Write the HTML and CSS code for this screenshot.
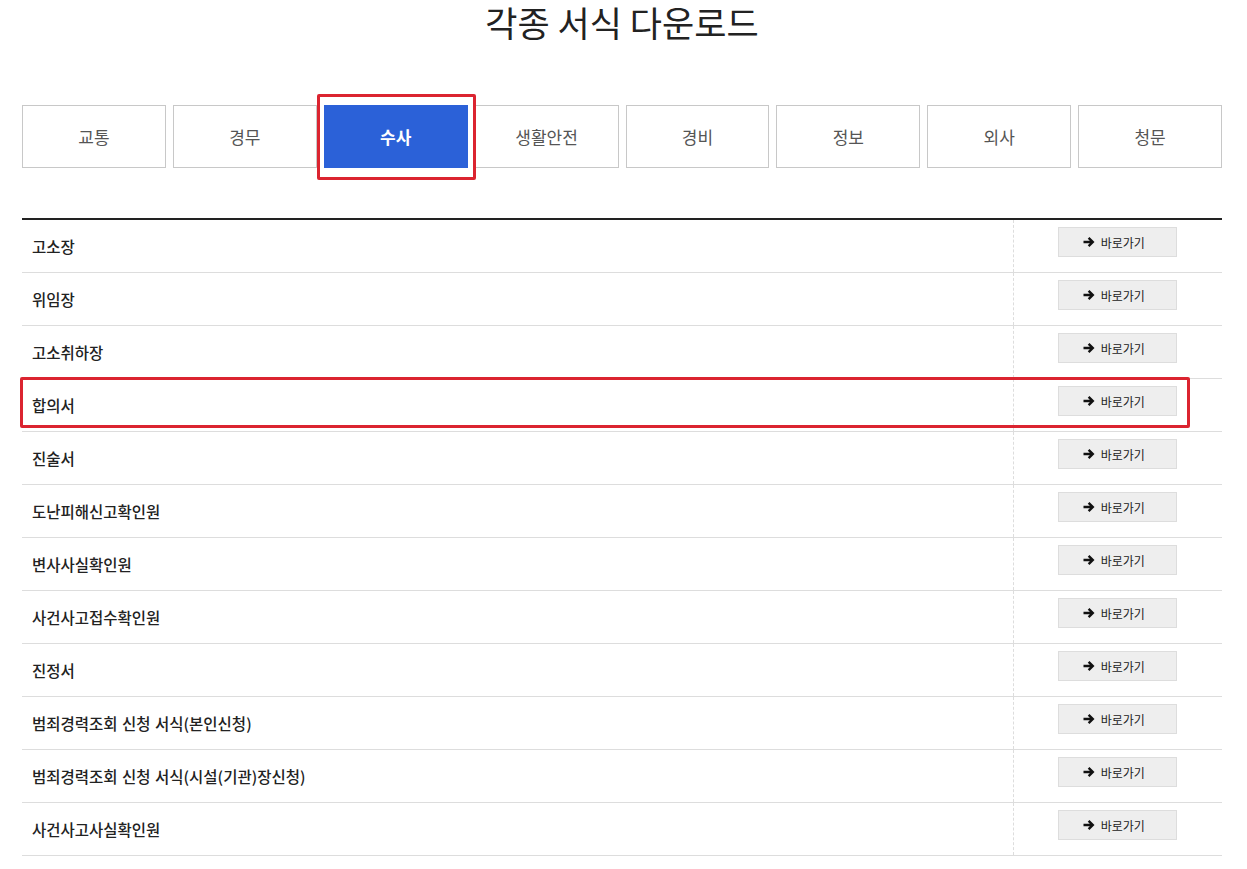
FILE: index.html
```html
<!DOCTYPE html>
<html>

<head>
	<meta http-equiv="Content-Type" content="text/html; charset=utf-8"/>
	<title>각종 서식 다운로드</title>
	<link rel="stylesheet" href="styles.css">
</head>

<body>
<div class="wrap">
	<h1 class="title">각종 서식 다운로드</h1>

	<ul class="tabs">
		<li><a href="#">교통</a></li>
		<li><a href="#">경무</a></li>
		<li class="on"><a href="#">수사</a></li>
		<li><a href="#">생활안전</a></li>
		<li><a href="#">경비</a></li>
		<li><a href="#">정보</a></li>
		<li><a href="#">외사</a></li>
		<li><a href="#">청문</a></li>
		<span class="mark mark-tab"></span>
	</ul>

	<div class="list">
		<table>
			<colgroup>
				<col/>
				<col class="col-btn"/>
			</colgroup>
			<tbody id="rows">
			</tbody>
		</table>
		<span class="mark mark-row"></span>
	</div>
</div>
<script>
	var forms = [
		"고소장",
		"위임장",
		"고소취하장",
		"합의서",
		"진술서",
		"도난피해신고확인원",
		"변사사실확인원",
		"사건사고접수확인원",
		"진정서",
		"범죄경력조회 신청 서식(본인신청)",
		"범죄경력조회 신청 서식(시설(기관)장신청)",
		"사건사고사실확인원"
	];

	var arrow = '<svg class="ico" viewBox="0 0 12 12" width="12" height="12"><path d="M0.5 6h9M5.6 1.8L9.8 6 5.6 10.2" fill="none" stroke="#111" stroke-width="2.4"/></svg>';

	var tbody = document.getElementById('rows');
	forms.forEach(function (name) {
		var tr = document.createElement('tr');
		tr.innerHTML = '<td class="name">' + name + '</td>' +
			'<td class="go"><a class="btn" href="#">' + arrow + '<span>바로가기</span></a></td>';
		tbody.appendChild(tr);
	});
</script>
</body>

</html>
```

FILE: styles.css
```css
html {
    font-family: "Noto Sans CJK KR", "Noto Sans", sans-serif;
    color: #222;
}

body {
    margin: 0;
    background: #fff;
}

a {
    color: inherit;
    text-decoration: none;
}

.wrap {
    width: 1200px;
    margin: 0 0 0 22px;
}

.title {
    margin: 0;
    padding-top: 2px;
    height: 92px;
    line-height: 40px;
    font-size: 35px;
    font-weight: 400;
    text-align: center;
    color: #222;
}

.tabs {
    position: relative;
    list-style: none;
    margin: 0;
    padding: 0;
    padding-top: 11px;
    display: grid;
    grid-template-columns: repeat(8, 1fr);
    column-gap: 7px;
}

.tabs li a {
    display: flex;
    align-items: center;
    justify-content: center;
    height: 61px;
    border: 1px solid #c8c8c8;
    font-size: 17px;
    color: #555;
}

.tabs li.on a {
    background: #2b61d8;
    border-color: #2b61d8;
    color: #fff;
    font-weight: 700;
}

.list {
    position: relative;
    margin-top: 50px;
    border-top: 2px solid #222;
}

table {
    width: 100%;
    border-collapse: collapse;
}

.col-btn {
    width: 209px;
}

td {
    border-bottom: 1px solid #ddd;
    height: 52px;
    padding: 0;
}

td.name {
    padding-left: 10px;
    font-size: 15.5px;
    font-weight: 500;
    word-spacing: 1px;
    color: #222;
}

td.go {
    border-left: 1px dashed #ddd;
    vertical-align: top;
    text-align: center;
}

.btn {
    display: inline-flex;
    align-items: center;
    justify-content: center;
    gap: 6px;
    box-sizing: border-box;
    width: 119px;
    height: 30px;
    margin-top: 7px;
    background: #eee;
    border: 1px solid #ddd;
    font-size: 12px;
    color: #222;
}

.btn .ico {
    margin-left: -8px;
}

.mark {
    position: absolute;
    border: 3px solid #db2430;
    border-radius: 2px;
    pointer-events: none;
}

.mark-tab {
    left: 295px;
    top: 0;
    width: 153px;
    height: 80px;
}

.mark-row {
    left: -2px;
    top: 157px;
    width: 1164px;
    height: 45px;
}
```
